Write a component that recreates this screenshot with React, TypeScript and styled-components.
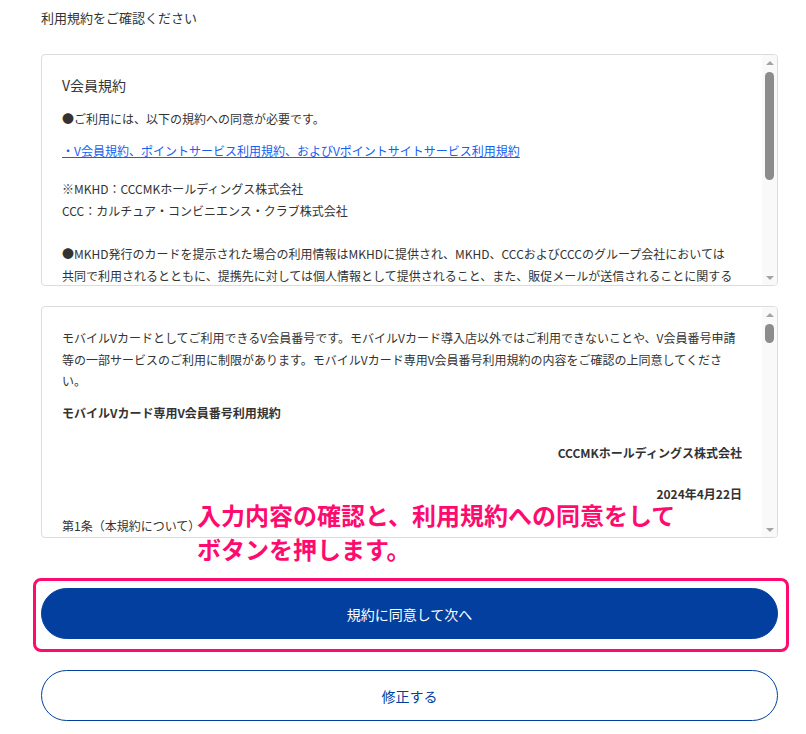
import React from "react";
import styled, { createGlobalStyle } from "styled-components";

const GlobalStyle = createGlobalStyle`
  html, body {
    margin: 0;
    padding: 0;
    background: #fff;
  }
  body {
    font-family: "Noto Sans CJK JP", "Noto Sans", sans-serif;
    color: #333;
  }
`;

const Page = styled.div`
  width: 737px;
  margin-left: 41px;
  padding: 8px 0 12px;
  position: relative;
`;

const Lead = styled.p`
  margin: 0 0 26px;
  font-size: 13px;
  line-height: 20px;
  color: #333;
`;

// bordered box: scrollable text + a drawn scroll rail (headless hides real scrollbars)
const TermsBox = styled.div<{ $gap?: number }>`
  display: flex;
  height: 230px;
  border: 1px solid #dcdcdc;
  border-radius: 4px;
  overflow: hidden;
  margin-bottom: ${(p) => p.$gap ?? 0}px;
`;

const Scroller = styled.div`
  flex: 1;
  overflow-y: auto;
  scrollbar-width: none;
  padding: 20px;
  font-size: 12px;
  line-height: 1.8;
  color: #333;
`;

const Rail = styled.div`
  width: 15px;
  flex: none;
  display: flex;
  flex-direction: column;
  background: #f9f9f9;
`;

const Arrow = styled.div<{ $down?: boolean }>`
  height: 15px;
  flex: none;
  display: flex;
  align-items: center;
  justify-content: center;

  &::before {
    content: "";
    width: 0;
    height: 0;
    border-left: 4px solid transparent;
    border-right: 4px solid transparent;
    ${(p) =>
      p.$down ? "border-top: 4px solid #a3a3a3;" : "border-bottom: 4px solid #a3a3a3;"}
  }
`;

const Track = styled.div`
  flex: 1;
  padding: 2px 3px;
`;

const Thumb = styled.div<{ $size: number }>`
  height: ${(p) => p.$size}px;
  background: #8c8c8c;
  border-radius: 5px;
`;

const BoxTitle = styled.h3`
  margin: 0 0 13px;
  font-size: 14px;
  line-height: 20px;
  font-weight: normal;
`;

const Para = styled.p<{ $mb?: number; $bold?: boolean; $right?: boolean }>`
  margin: 0 0 ${(p) => p.$mb ?? 10}px;
  font-weight: ${(p) => (p.$bold ? "bold" : "normal")};
  text-align: ${(p) => (p.$right ? "right" : "left")};
`;

const TermsLink = styled.a`
  color: #1560f0;
  text-decoration: underline;
`;

const Actions = styled.div`
  margin-top: 50px;
  display: flex;
  flex-direction: column;
  gap: 31px;
`;

const Highlight = styled.div`
  position: relative;
`;

const Frame = styled.div`
  position: absolute;
  left: -8px;
  right: -11px;
  top: -10px;
  bottom: -13px;
  border: 3px solid #ff0a6e;
  border-radius: 8px;
  pointer-events: none;
`;

const Button = styled.button<{ $primary?: boolean }>`
  display: block;
  width: 100%;
  height: 51px;
  border-radius: 26px;
  border: 1px solid #033f9e;
  background: ${(p) => (p.$primary ? "#033f9e" : "#fff")};
  color: ${(p) => (p.$primary ? "#fff" : "#033f9e")};
  font-family: "Noto Sans CJK JP", sans-serif;
  font-size: 14px;
  cursor: pointer;
`;

const Note = styled.div`
  position: absolute;
  left: 156px;
  top: 498px;
  font-size: 24px;
  line-height: 34px;
  font-weight: bold;
  color: #ff0a6e;
  pointer-events: none;
`;

const articles = [
  "本規約は、CCCMKホールディングス株式会社（以下「当社」といいます）が発行するモバイルVカード専用V会員番号（以下「本番号」といいます）の利用条件を定めるものです。",
  "第2条（本番号の発行）",
  "当社は、当社所定の方法により申込みを行い、当社が承認した方に対し、本番号を発行します。本番号は、モバイルVカード導入店においてのみご利用いただけます。",
  "第3条（利用の制限）",
  "本番号では、V会員番号申請等の一部サービスをご利用いただけない場合があります。詳細は当社ウェブサイト等でご確認ください。",
  "第4条（個人情報の取扱い）",
  "当社は、本番号の利用に伴い取得した個人情報を、V会員規約に定める利用目的の範囲内で取り扱います。",
  "第5条（本番号の管理）",
  "会員は、本番号を自己の責任において管理するものとし、第三者に貸与、譲渡または使用させてはならないものとします。",
  "第6条（規約の変更）",
  "当社は、必要に応じて本規約を変更することができるものとします。変更後の規約は、当社ウェブサイト等で公表した時点から効力を生じるものとします。",
  "第7条（免責）",
  "当社は、通信障害、システムの保守その他やむを得ない事由により本番号の利用ができなかった場合、会員に生じた損害について責任を負わないものとします。",
];

function ScrollRail({ thumb }: { thumb: number }) {
  return (
    <Rail>
      <Arrow />
      <Track>
        <Thumb $size={thumb} />
      </Track>
      <Arrow $down />
    </Rail>
  );
}

export default function App() {
  return (
    <>
      <GlobalStyle />
      <Page>
        <Lead>利用規約をご確認ください</Lead>

        <TermsBox $gap={20}>
          <Scroller>
            <BoxTitle>V会員規約</BoxTitle>
            <Para>●ご利用には、以下の規約への同意が必要です。</Para>
            <Para $mb={17}>
              <TermsLink href="#">
                ・V会員規約、ポイントサービス利用規約、およびVポイントサイトサービス利用規約
              </TermsLink>
            </Para>
            <Para $mb={21.6}>
              ※MKHD：CCCMKホールディングス株式会社
              <br />
              CCC：カルチュア・コンビニエンス・クラブ株式会社
            </Para>
            <Para>
              ●MKHD発行のカードを提示された場合の利用情報はMKHDに提供され、MKHD、CCCおよびCCCのグループ会社においては
              <br />
              共同で利用されるとともに、提携先に対しては個人情報として提供されること、また、販促メールが送信されることに関する
              <br />
              V会員規約、ポイントサービス利用規約への同意が必要です。
            </Para>
            <Para>
              ●詳細は各規約をご確認のうえ、内容に同意いただける場合のみ次へお進みください。
            </Para>
          </Scroller>
          <ScrollRail thumb={108} />
        </TermsBox>

        <TermsBox>
          <Scroller>
            <Para>
              モバイルVカードとしてご利用できるV会員番号です。モバイルVカード導入店以外ではご利用できないことや、V会員番号申請
              <br />
              等の一部サービスのご利用に制限があります。モバイルVカード専用V会員番号利用規約の内容をご確認の上同意してくださ
              <br />
              い。
            </Para>
            <Para $bold $mb={19}>
              モバイルVカード専用V会員番号利用規約
            </Para>
            <Para $bold $right $mb={19}>
              CCCMKホールディングス株式会社
            </Para>
            <Para $bold $right>
              2024年4月22日
            </Para>
            <Para>第1条（本規約について）</Para>
            {articles.map((text, i) => (
              <Para key={i}>{text}</Para>
            ))}
          </Scroller>
          <ScrollRail thumb={19} />
        </TermsBox>

        <Actions>
          <Highlight>
            <Button $primary>規約に同意して次へ</Button>
            <Frame />
          </Highlight>
          <Button>修正する</Button>
        </Actions>

        <Note>
          入力内容の確認と、利用規約への同意をして
          <br />
          ボタンを押します。
        </Note>
      </Page>
    </>
  );
}
